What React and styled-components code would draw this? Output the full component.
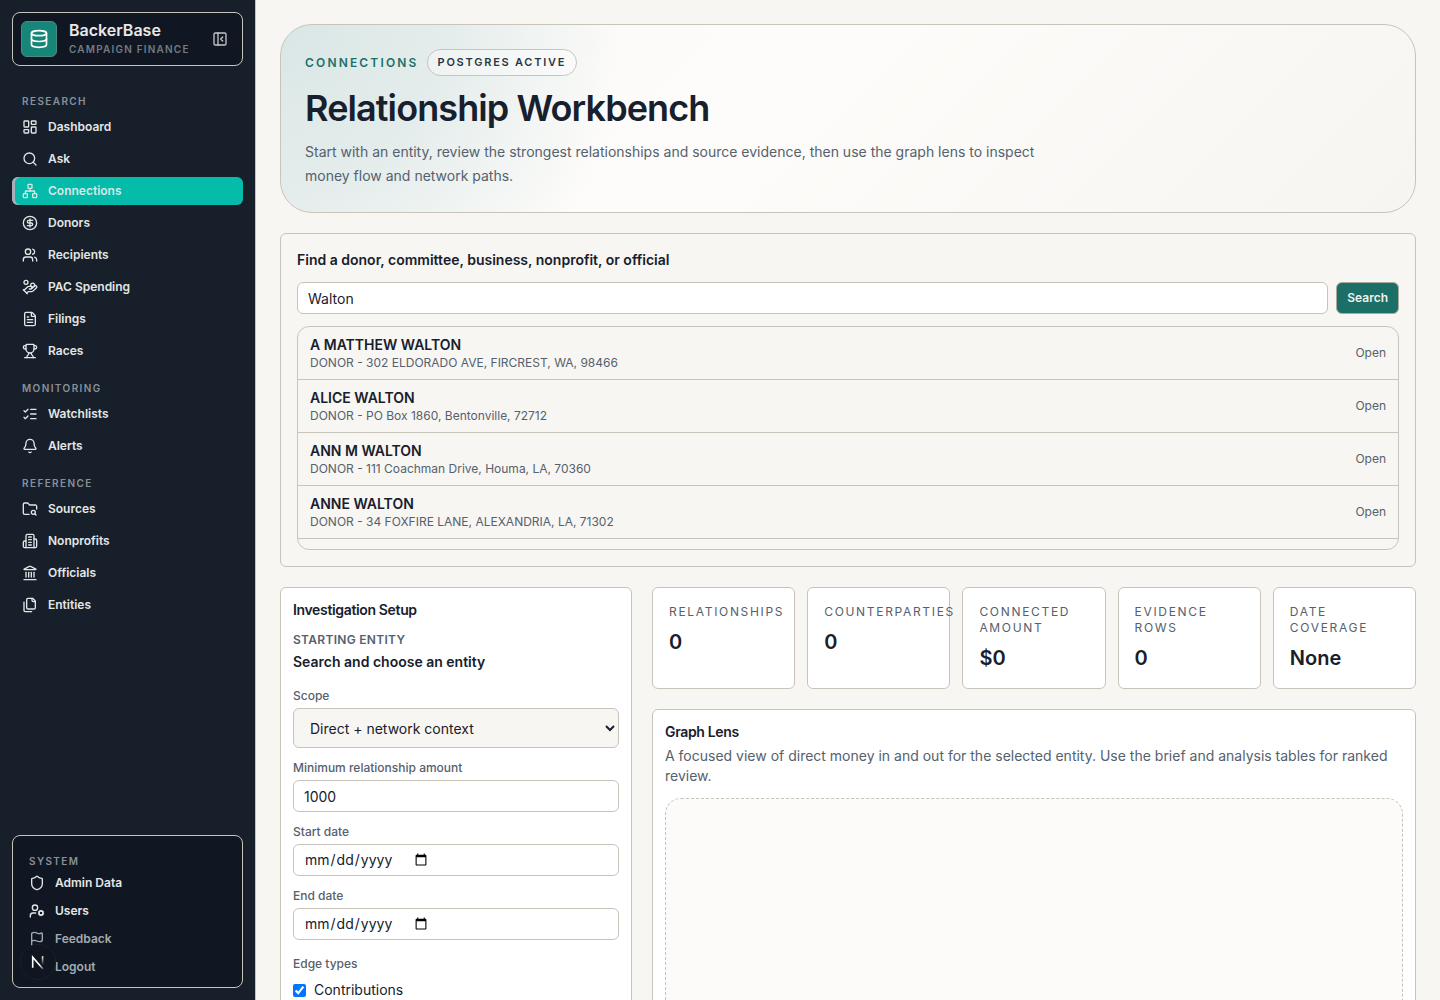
import React, { useState } from "react";
import styled, { createGlobalStyle } from "styled-components";
import {
  Bell,
  CircleDollarSign,
  Database,
  FileText,
  Flag,
  FolderSearch,
  HandCoins,
  Landmark,
  LayoutDashboard,
  ListChecks,
  LogOut,
  Network,
  PanelLeftClose,
  Search,
  Shield,
  Trophy,
  UserCog,
  Users,
} from "lucide-react";

const LineIcon = ({ size = 16, children }) => (
  <svg
    width={size}
    height={size}
    viewBox="0 0 24 24"
    fill="none"
    stroke="currentColor"
    strokeWidth="2"
    strokeLinecap="round"
    strokeLinejoin="round"
  >
    {children}
  </svg>
);

const BuildingIcon = ({ size }) => (
  <LineIcon size={size}>
    <path d="M6 22V4a2 2 0 0 1 2-2h8a2 2 0 0 1 2 2v18Z" />
    <path d="M6 12H4a2 2 0 0 0-2 2v6a2 2 0 0 0 2 2h2" />
    <path d="M18 9h2a2 2 0 0 1 2 2v9a2 2 0 0 1-2 2h-2" />
    <path d="M10 6h4M10 10h4M10 14h4M10 18h4" />
  </LineIcon>
);

const FilesIcon = ({ size }) => (
  <LineIcon size={size}>
    <path d="M20 7h-3a2 2 0 0 1-2-2V2" />
    <path d="M9 18a2 2 0 0 1-2-2V4a2 2 0 0 1 2-2h7l4 4v10a2 2 0 0 1-2 2Z" />
    <path d="M3 7.6v12.8A1.6 1.6 0 0 0 4.6 22h9.8" />
  </LineIcon>
);

const navGroups = [
  {
    title: "Research",
    items: [
      { label: "Dashboard", icon: LayoutDashboard },
      { label: "Ask", icon: Search },
      { label: "Connections", icon: Network, active: true },
      { label: "Donors", icon: CircleDollarSign },
      { label: "Recipients", icon: Users },
      { label: "PAC Spending", icon: HandCoins },
      { label: "Filings", icon: FileText },
      { label: "Races", icon: Trophy },
    ],
  },
  {
    title: "Monitoring",
    items: [
      { label: "Watchlists", icon: ListChecks },
      { label: "Alerts", icon: Bell },
    ],
  },
  {
    title: "Reference",
    items: [
      { label: "Sources", icon: FolderSearch },
      { label: "Nonprofits", icon: BuildingIcon },
      { label: "Officials", icon: Landmark },
      { label: "Entities", icon: FilesIcon },
    ],
  },
];

const systemItems = [
  { label: "Admin Data", icon: Shield },
  { label: "Users", icon: UserCog },
  { label: "Feedback", icon: Flag, muted: true },
  { label: "Logout", icon: LogOut, muted: true },
];

const results = [
  {
    name: "A MATTHEW WALTON",
    detail: "DONOR - 302 ELDORADO AVE, FIRCREST, WA, 98466",
  },
  { name: "ALICE WALTON", detail: "DONOR - PO Box 1860, Bentonville, 72712" },
  {
    name: "ANN M WALTON",
    detail: "DONOR - 111 Coachman Drive, Houma, LA, 70360",
  },
  {
    name: "ANNE WALTON",
    detail: "DONOR - 34 FOXFIRE LANE, ALEXANDRIA, LA, 71302",
  },
];

const stats = [
  { label: "Relationships", value: "0" },
  { label: "Counterparties", value: "0" },
  { label: "Connected amount", value: "$0" },
  { label: "Evidence rows", value: "0" },
  { label: "Date coverage", value: "None" },
];

const Sidebar = () => (
  <Aside>
    <Brand>
      <Logo>
        <Database size={20} />
      </Logo>
      <BrandText>
        <BrandName>BackerBase</BrandName>
        <BrandSub>Campaign Finance</BrandSub>
      </BrandText>
      <CollapseButton type="button" aria-label="Collapse sidebar">
        <PanelLeftClose size={16} />
      </CollapseButton>
    </Brand>
    <Nav>
      {navGroups.map((group) => (
        <NavGroup key={group.title}>
          <NavTitle>{group.title}</NavTitle>
          {group.items.map(({ label, icon: Icon, active }) => (
            <NavLink href="#" key={label} $active={active}>
              <Icon size={16} />
              {label}
            </NavLink>
          ))}
        </NavGroup>
      ))}
    </Nav>
    <SystemBox>
      <SystemTitle>System</SystemTitle>
      <SystemLinks>
        {systemItems.map(({ label, icon: Icon, muted }) => (
          <SystemLink href="#" key={label} $muted={muted}>
            <Icon size={16} />
            {label}
          </SystemLink>
        ))}
      </SystemLinks>
    </SystemBox>
  </Aside>
);

const SearchPanel = () => {
  const [query, setQuery] = useState("Walton");
  return (
    <SearchCard>
      <SearchLabel htmlFor="entity-search">
        Find a donor, committee, business, nonprofit, or official
      </SearchLabel>
      <SearchRow>
        <TextInput
          id="entity-search"
          value={query}
          onChange={(e) => setQuery(e.target.value)}
        />
        <SearchButton type="button">Search</SearchButton>
      </SearchRow>
      <ResultList>
        {results.map((result) => (
          <ResultRow type="button" key={result.name}>
            <span>
              <ResultName>{result.name}</ResultName>
              <ResultDetail>{result.detail}</ResultDetail>
            </span>
            <ResultAction>Open</ResultAction>
          </ResultRow>
        ))}
      </ResultList>
    </SearchCard>
  );
};

const SetupPanel = () => (
  <Panel>
    <PanelTitle>Investigation Setup</PanelTitle>
    <Overline>Starting entity</Overline>
    <EntityName>Search and choose an entity</EntityName>
    <Fields>
      <Field>
        <FieldLabel htmlFor="scope">Scope</FieldLabel>
        <Select id="scope">
          <option>Direct + network context</option>
        </Select>
      </Field>
      <Field>
        <FieldLabel htmlFor="min-amount">Minimum relationship amount</FieldLabel>
        <TextInput id="min-amount" defaultValue="1000" />
      </Field>
      <Field>
        <FieldLabel htmlFor="start-date">Start date</FieldLabel>
        <TextInput id="start-date" type="date" />
      </Field>
      <Field>
        <FieldLabel htmlFor="end-date">End date</FieldLabel>
        <TextInput id="end-date" type="date" />
      </Field>
    </Fields>
    <EdgeTypes>
      <Legend>Edge types</Legend>
      <CheckLabel>
        <Checkbox type="checkbox" defaultChecked />
        Contributions
      </CheckLabel>
    </EdgeTypes>
  </Panel>
);

const App = () => {
  return (
    <Shell>
      <GlobalStyle />
      <Sidebar />
      <Main>
        <Hero>
          <HeroTop>
            <Eyebrow>Connections</Eyebrow>
            <Pill>Postgres active</Pill>
          </HeroTop>
          <HeroTitle>Relationship Workbench</HeroTitle>
          <HeroText>
            Start with an entity, review the strongest relationships and source
            evidence, then use the graph lens to inspect money flow and network
            paths.
          </HeroText>
        </Hero>
        <SearchPanel />
        <Columns>
          <SetupPanel />
          <RightColumn>
            <StatGrid>
              {stats.map((stat) => (
                <StatCard key={stat.label}>
                  <StatLabel>{stat.label}</StatLabel>
                  <StatValue>{stat.value}</StatValue>
                </StatCard>
              ))}
            </StatGrid>
            <Panel>
              <PanelTitle>Graph Lens</PanelTitle>
              <PanelText>
                A focused view of direct money in and out for the selected
                entity. Use the brief and analysis tables for ranked review.
              </PanelText>
              <GraphCanvas />
            </Panel>
          </RightColumn>
        </Columns>
      </Main>
      <DevBadge type="button" aria-label="Open dev tools">
        <svg width="16" height="16" viewBox="0 0 16 16" fill="none">
          <defs>
            <linearGradient id="diag" x1="7" y1="8" x2="13" y2="15" gradientUnits="userSpaceOnUse">
              <stop offset="0.4" stopColor="#fff" />
              <stop offset="1" stopColor="#fff" stopOpacity="0.3" />
            </linearGradient>
            <linearGradient id="stem" x1="12" y1="2" x2="12" y2="11" gradientUnits="userSpaceOnUse">
              <stop stopColor="#fff" />
              <stop offset="1" stopColor="#fff" stopOpacity="0" />
            </linearGradient>
          </defs>
          <path d="M2.7 13.8V3.2L13 15" stroke="url(#diag)" strokeWidth="1.6" />
          <path d="M12.6 2.2V11" stroke="url(#stem)" strokeWidth="1.6" />
        </svg>
      </DevBadge>
    </Shell>
  );
};

export default App;

const GlobalStyle = createGlobalStyle`
  *, *::before, *::after {
    box-sizing: border-box;
  }

  body {
    margin: 0;
    background: #f8f6f2;
    color: #17202c;
    font-family: Inter, "Liberation Sans", sans-serif;
    font-size: 14px;
    line-height: 20px;
    -webkit-font-smoothing: antialiased;
  }

  button, input, select {
    font: inherit;
    color: inherit;
  }

  h1, h2, p {
    margin: 0;
  }
`;

const Shell = styled.div`
  display: flex;
  align-items: flex-start;
`;

const Aside = styled.aside`
  position: sticky;
  top: 0;
  flex: 0 0 256px;
  display: flex;
  flex-direction: column;
  height: 100vh;
  padding: 12px;
  background: #171f2a;
  border-right: 1px solid #c9c4ba;
`;

const Brand = styled.div`
  display: flex;
  align-items: center;
  gap: 12px;
  padding: 8px;
  border: 1px solid #c9c4ba;
  border-radius: 8px;
  background: #101722;
`;

const Logo = styled.div`
  display: flex;
  align-items: center;
  justify-content: center;
  width: 36px;
  height: 36px;
  border: 1px solid #4d8a84;
  border-radius: 6px;
  background: #178577;
  color: #fff;
`;

const BrandText = styled.div`
  flex: 1;
  display: flex;
  flex-direction: column;
  gap: 2px;
`;

const BrandName = styled.div`
  font-size: 16px;
  line-height: 18px;
  font-weight: 600;
  color: #e9e9e7;
`;

const BrandSub = styled.div`
  font-size: 10px;
  line-height: 16px;
  font-weight: 600;
  letter-spacing: 0.12em;
  text-transform: uppercase;
  color: #737b84;
`;

const CollapseButton = styled.button`
  display: flex;
  align-items: center;
  justify-content: center;
  width: 28px;
  height: 28px;
  padding: 0;
  border: 0;
  background: none;
  color: #c3c7ca;
`;

const Nav = styled.nav`
  display: flex;
  flex-direction: column;
  gap: 16px;
  margin-top: 28px;
`;

const NavGroup = styled.div`
  display: flex;
  flex-direction: column;
  gap: 4px;
`;

const NavTitle = styled.div`
  padding: 0 10px;
  font-size: 10px;
  line-height: 15px;
  font-weight: 600;
  letter-spacing: 0.14em;
  text-transform: uppercase;
  color: #88909a;
`;

const NavLink = styled.a`
  display: flex;
  align-items: center;
  gap: 10px;
  height: 28px;
  padding: 0 10px;
  border-radius: 6px;
  font-size: 12px;
  font-weight: 600;
  text-decoration: none;
  color: ${({ $active }) => ($active ? "#d9e8e5" : "#e3e6e6")};
  background: ${({ $active }) => ($active ? "#05bba9" : "transparent")};
  box-shadow: ${({ $active }) => ($active ? "inset 3px 0 0 #a9adb5" : "none")};
`;

const SystemBox = styled.div`
  margin-top: auto;
  padding: 16px 8px 8px;
  border: 1px solid #c9c4ba;
  border-radius: 8px;
  background: #101722;
`;

const SystemTitle = styled(NavTitle)`
  padding: 0 8px;
  line-height: 19px;
`;

const SystemLinks = styled.div`
  display: flex;
  flex-direction: column;
  gap: 4px;
`;

const SystemLink = styled.a`
  display: flex;
  align-items: center;
  gap: 10px;
  height: 24px;
  padding: 0 8px;
  font-size: 12px;
  font-weight: 600;
  text-decoration: none;
  color: ${({ $muted }) => ($muted ? "#a3abb0" : "#e3e6e6")};
`;

/* floats over the bottom corner of the sidebar */
const DevBadge = styled.button`
  position: fixed;
  left: 20px;
  bottom: 20px;
  display: flex;
  align-items: center;
  justify-content: center;
  width: 36px;
  height: 36px;
  padding: 0;
  border: 1px solid #1a212c;
  border-radius: 50%;
  background: #101620;
`;

const Main = styled.main`
  flex: 1;
  min-width: 0;
  display: flex;
  flex-direction: column;
  gap: 20px;
  padding: 24px;
`;

const Hero = styled.section`
  padding: 24px;
  border: 1px solid #c9c4ba;
  border-radius: 32px;
  background:
    radial-gradient(
      circle at top left,
      rgba(15, 112, 118, 0.14),
      rgba(15, 112, 118, 0.1) 14%,
      transparent 30%
    ),
    linear-gradient(135deg, #fbfaf8, #fdfcfa 45%, #f7f5f1);
`;

const HeroTop = styled.div`
  display: flex;
  align-items: center;
  gap: 8px;
`;

const Eyebrow = styled.span`
  font-size: 12px;
  line-height: 16px;
  font-weight: 600;
  letter-spacing: 0.18em;
  text-transform: uppercase;
  color: #1d7068;
`;

const Pill = styled.span`
  padding: 4px 10px;
  border: 1px solid #c9c4ba;
  border-radius: 999px;
  background: rgba(255, 255, 255, 0.4);
  font-size: 11px;
  line-height: 17px;
  font-weight: 600;
  letter-spacing: 0.16em;
  text-transform: uppercase;
  color: #2b3642;
`;

const HeroTitle = styled.h1`
  margin-top: 12px;
  font-size: 36px;
  line-height: 40px;
  font-weight: 600;
  letter-spacing: -0.025em;
`;

const HeroText = styled.p`
  max-width: 768px;
  margin-top: 12px;
  line-height: 24px;
  color: #55616d;
`;

const SearchCard = styled.section`
  display: flex;
  flex-direction: column;
  gap: 12px;
  padding: 16px;
  border: 1px solid #c9c4ba;
  border-radius: 6px;
`;

const SearchLabel = styled.label`
  font-weight: 600;
`;

const SearchRow = styled.div`
  display: flex;
  gap: 8px;
`;

const TextInput = styled.input`
  display: flex;
  width: 100%;
  height: 32px;
  padding: 4px 10px;
  border: 1px solid #c9c4ba;
  border-radius: 6px;
  background: #fff;
`;

const SearchButton = styled.button`
  height: 32px;
  padding: 0 10px;
  border: 1px solid #a9aba1;
  border-radius: 6px;
  background: #1b6f67;
  font-size: 12px;
  font-weight: 600;
  color: #f0f2f0;
`;

const ResultList = styled.div`
  height: 224px;
  border: 1px solid #c9c4ba;
  border-radius: 12px;
  overflow: hidden;
`;

const ResultRow = styled.button`
  display: flex;
  align-items: center;
  justify-content: space-between;
  width: 100%;
  padding: 8px 12px;
  border: 0;
  border-bottom: 1px solid #c9c4ba;
  background: none;
  text-align: left;
`;

const ResultName = styled.span`
  display: block;
  font-weight: 600;
`;

const ResultDetail = styled.span`
  display: block;
  font-size: 12px;
  line-height: 16px;
  color: #55616d;
`;

const ResultAction = styled.span`
  font-size: 12px;
  line-height: 16px;
  color: #55616d;
`;

const Columns = styled.div`
  display: grid;
  grid-template-columns: 352px minmax(0, 1fr);
  gap: 20px;
  align-items: start;
`;

const RightColumn = styled.div`
  display: flex;
  flex-direction: column;
  gap: 20px;
`;

const Panel = styled.section`
  padding: 12px;
  border: 1px solid #c9c4ba;
  border-radius: 6px;
  background: #fff;
`;

const PanelTitle = styled.h2`
  font-size: 14px;
  line-height: 20px;
  font-weight: 600;
  letter-spacing: -0.025em;
`;

const PanelText = styled.p`
  margin-top: 4px;
  color: #55616d;
`;

const Overline = styled.p`
  margin-top: 12px;
  font-size: 12px;
  line-height: 16px;
  font-weight: 600;
  letter-spacing: 0.025em;
  text-transform: uppercase;
  color: #55616d;
`;

const EntityName = styled.p`
  margin-top: 4px;
  font-weight: 600;
`;

const Fields = styled.div`
  display: flex;
  flex-direction: column;
  gap: 12px;
  margin-top: 16px;
`;

const Field = styled.div`
  display: flex;
  flex-direction: column;
  gap: 4px;
`;

const FieldLabel = styled.label`
  font-size: 12px;
  line-height: 16px;
  font-weight: 500;
  color: #55616d;
`;

const Select = styled.select`
  width: 100%;
  height: 40px;
  padding: 0 0 0 12px;
  border: 1px solid #c9c4ba;
  border-radius: 6px;
  background: #f8f6f2;
`;

const EdgeTypes = styled.fieldset`
  margin: 16px 0 0;
  padding: 0;
  border: 0;
`;

const Legend = styled.legend`
  padding: 0;
  margin-bottom: 8px;
  font-size: 12px;
  line-height: 16px;
  font-weight: 500;
  color: #55616d;
`;

const CheckLabel = styled.label`
  display: flex;
  align-items: center;
  gap: 8px;
`;

const Checkbox = styled.input`
  width: 13px;
  height: 13px;
  margin: 0;
`;

const StatGrid = styled.div`
  display: grid;
  grid-template-columns: repeat(5, minmax(0, 1fr));
  gap: 12px;
`;

const StatCard = styled.div`
  padding: 16px;
  border: 1px solid #c9c4ba;
  border-radius: 6px;
  background: #fff;
`;

const StatLabel = styled.div`
  font-size: 12px;
  line-height: 16px;
  letter-spacing: 0.14em;
  text-transform: uppercase;
  color: #55616d;
`;

const StatValue = styled.div`
  margin-top: 8px;
  font-size: 20px;
  line-height: 28px;
  font-weight: 600;
`;

const GraphCanvas = styled.div`
  height: 420px;
  margin-top: 12px;
  border: 1px dashed #c9c4ba;
  border-radius: 16px;
  background: #fcfbf9;
`;
